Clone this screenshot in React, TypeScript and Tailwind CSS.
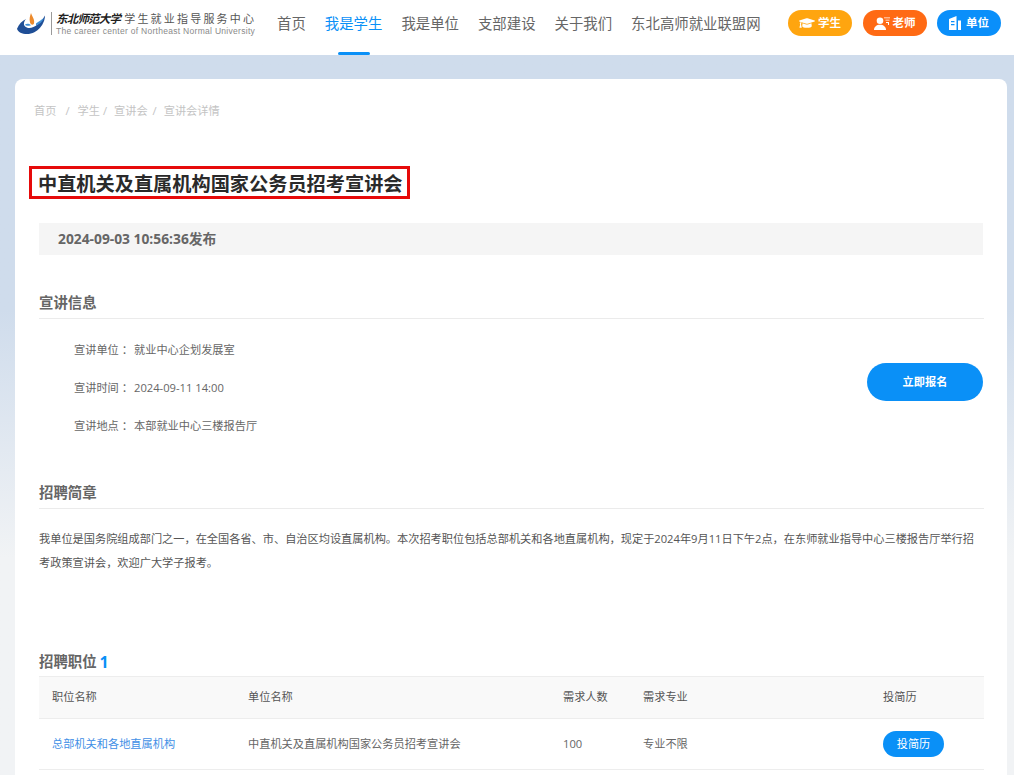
import { FaGraduationCap } from 'react-icons/fa';

const navItems = ['首页', '我是学生', '我是单位', '支部建设', '关于我们', '东北高师就业联盟网'];

function Logo() {
  return (
    <div className="flex h-[55px] w-[277px] shrink-0 items-center pb-[8px] pl-[16px]">
      <svg width="30" height="23" viewBox="0 0 30 26" preserveAspectRatio="none" className="shrink-0">
        <path d="M1 19C3 14 6 10 10 8C7 12 7 17 12 18C18 19 24 13 29 4C29 13 22 25 11 25C6 25 2 23 1 19Z" fill="#1f4e96" />
        <path d="M9 14C11 13 13 13 15 15C12 16 10 16 9 14Z" fill="#3f8fd6" />
        <path d="M14 12C13 8 14 4 15 1C16 5 19 8 18 13C17 15 15 15 14 12Z" fill="#ec8a2c" />
        <path d="M20 13C22 11 25 9 28 7C26 11 24 14 20 15Z" fill="#3f8fd6" />
      </svg>
      <div className="ml-[5px] mr-[4px] h-[23px] w-px shrink-0 bg-[#9a9a9a]" />
      <div className="flex flex-col">
        <div className="flex h-[15px] items-center whitespace-nowrap">
          <span className="font-['Noto_Sans_CJK_SC',sans-serif] text-[11.5px] font-bold italic leading-none tracking-[-0.8px] text-[#222]">东北师范大学</span>
          <span className="ml-[4px] font-['Noto_Sans_CJK_SC',sans-serif] text-[11px] leading-none tracking-[2.2px] text-[#555]">学生就业指导服务中心</span>
        </div>
        <div className="whitespace-nowrap font-['Liberation_Sans',sans-serif] text-[8.5px] leading-[10px] tracking-[0.29px] text-[#8a8a8a]">The career center of Northeast Normal University</div>
      </div>
    </div>
  );
}

function TeacherIcon() {
  return (
    <svg width="16" height="13" viewBox="0 0 16 13" fill="white">
      <circle cx="6" cy="3.8" r="3.3" />
      <path d="M0 13C0 9.8 2.5 7.8 6 7.8C9.5 7.8 12 9.8 12 13Z" />
      <path d="M10 0.5H16V1.3H10ZM11.5 2.8H15.5V3.6H11.5ZM12 5H15V8H14V6H12Z" />
    </svg>
  );
}

function BuildingIcon() {
  return (
    <svg width="12" height="14" viewBox="0 0 12 14" fill="white">
      <path d="M0 3L7.5 0V14H0ZM2 5V6.2H5.5V5ZM2 8V9.2H5.5V8Z" fillRule="evenodd" />
      <path d="M9 4.5H12V14H9Z" />
    </svg>
  );
}

function RoleButton({ bg, label, icon, gap }: { bg: string; label: string; icon: React.ReactNode; gap: string }) {
  return (
    <button className={`flex h-[26px] w-[64px] items-center justify-center rounded-full text-[11.5px] font-bold text-white ${bg} ${gap}`}>
      {icon}
      <span>{label}</span>
    </button>
  );
}

function SectionTitle({ children }: { children: React.ReactNode }) {
  return (
    <div className="flex h-[31px] items-center border-b border-[#ebebeb] text-[14.4px] font-bold leading-none text-[#666]">
      {children}
    </div>
  );
}

function InfoRow({ label, value }: { label: string; value: string }) {
  return (
    <div className="flex h-[38px] items-center text-[11.2px] text-[#666]">
      <span className="w-[60px] whitespace-nowrap">{label} ：</span>
      <span>{value}</span>
    </div>
  );
}

export default function App() {
  return (
    <div className="h-[775px] w-[1014px] overflow-hidden bg-gradient-to-b from-[#cfdcec] from-[40%] to-[#f1f3f5] to-[72%] font-['Open_Sans','Noto_Sans_CJK_SC',sans-serif]">
      {/* Top bar */}
      <header className="flex h-[55px] items-stretch bg-white">
        <Logo />
        <nav className="flex">
          {navItems.map((item, i) => (
            <a key={item} className={`relative mr-[19px] flex items-center pb-[8px] text-[14.4px] ${i === 1 ? 'text-[#0a90f7]' : 'text-[#666]'}`}>
              {item}
              {i === 1 && <span className="absolute bottom-0 left-1/2 h-[3px] w-[32px] -translate-x-1/2 rounded-[2px] bg-[#0a90f7]" />}
            </a>
          ))}
        </nav>
        <div className="ml-auto flex items-center gap-[10.5px] pb-[9px] pr-[13px]">
          <RoleButton bg="bg-[#ffa50f]" gap="gap-[3px]" label="学生" icon={<FaGraduationCap size={16} />} />
          <RoleButton bg="bg-[#ff6a14]" gap="gap-[3px]" label="老师" icon={<TeacherIcon />} />
          <RoleButton bg="bg-[#0a8ffa]" gap="gap-[5px]" label="单位" icon={<BuildingIcon />} />
        </div>
      </header>

      <main className="ml-[15px] mt-[24px] h-[800px] w-[992px] rounded-[8px] bg-white px-[24px]">
        {/* Breadcrumb */}
        <div className="flex h-[64px] items-center text-[11.2px] text-[#c4c4c4]">
          <span className="-ml-[5px]">首页</span>
          <span className="ml-[9px]">/</span>
          <span className="ml-[8px]">学生</span>
          <span className="ml-[3px]">/</span>
          <span className="ml-[7px]">宣讲会</span>
          <span className="ml-[5px]">/</span>
          <span className="ml-[7px]">宣讲会详情</span>
        </div>

        {/* Title */}
        <div className="mt-[23px]">
          <h1 className="-ml-[10px] inline-flex h-[33px] items-center whitespace-nowrap border-[3px] border-[#e60a0a] pl-[6px] pr-[4px] pt-[2px] text-[19.2px] font-bold leading-none text-[#2a2a2a]">
            中直机关及直属机构国家公务员招考宣讲会
          </h1>
        </div>

        <div className="mt-[24px] flex h-[32px] w-[944px] items-center bg-[#f5f5f5] pl-[19px] text-[13.8px] font-bold text-[#666]">
          2024-09-03 10:56:36发布
        </div>

        {/* Info */}
        <div className="mt-[33px] w-[945px]">
          <SectionTitle>宣讲信息</SectionTitle>
          <div className="flex items-center justify-between pt-[12px]">
            <div className="pl-[35px]">
              <InfoRow label="宣讲单位" value="就业中心企划发展室" />
              <InfoRow label="宣讲时间" value="2024-09-11 14:00" />
              <InfoRow label="宣讲地点" value="本部就业中心三楼报告厅" />
            </div>
            <button className="mb-[12px] mr-[1px] h-[38px] w-[116px] rounded-full bg-[#0a90f7] text-[11.2px] font-bold text-white">立即报名</button>
          </div>
        </div>

        {/* Brochure */}
        <div className="mt-[33px] w-[945px]">
          <SectionTitle>招聘简章</SectionTitle>
          <p className="mt-[18px] text-[11.2px] leading-[24px] text-[#555]">
            我单位是国务院组成部门之一，在全国各省、市、自治区均设直属机构。本次招考职位包括总部机关和各地直属机构，现定于2024年9月11日下午2点，在东师就业指导中心三楼报告厅举行招考政策宣讲会，欢迎广大学子报考。
          </p>
        </div>

        {/* Positions */}
        <div className="mt-[73px] w-[945px]">
          <div className="flex h-[28px] items-center text-[14.4px] font-bold text-[#666]">
            招聘职位<span className="ml-[3px] text-[16px] text-[#0a90f7]">1</span>
          </div>
          <table className="w-full table-fixed border-t border-[#ededed] text-left text-[11.2px]">
            <thead>
              <tr className="h-[42px] border-b border-[#ededed] bg-[#f9f9f9] text-[#555]">
                <th className="w-[196px] pl-[13px] font-normal">职位名称</th>
                <th className="w-[315px] pl-[13px] font-normal">单位名称</th>
                <th className="w-[80px] pl-[13px] font-normal">需求人数</th>
                <th className="w-[240px] pl-[13px] font-normal">需求专业</th>
                <th className="pl-[13px] font-normal">投简历</th>
              </tr>
            </thead>
            <tbody>
              <tr className="h-[51px] border-b border-[#ededed] text-[#666]">
                <td className="pl-[13px] text-[#3f8fe6]">总部机关和各地直属机构</td>
                <td className="pl-[13px]">中直机关及直属机构国家公务员招考宣讲会</td>
                <td className="pl-[13px]">100</td>
                <td className="pl-[13px]">专业不限</td>
                <td className="pl-[13px]">
                  <button className="h-[26px] w-[61px] rounded-full bg-[#0a90f7] text-[11.2px] text-white">投简历</button>
                </td>
              </tr>
            </tbody>
          </table>
        </div>
      </main>
    </div>
  );
}
